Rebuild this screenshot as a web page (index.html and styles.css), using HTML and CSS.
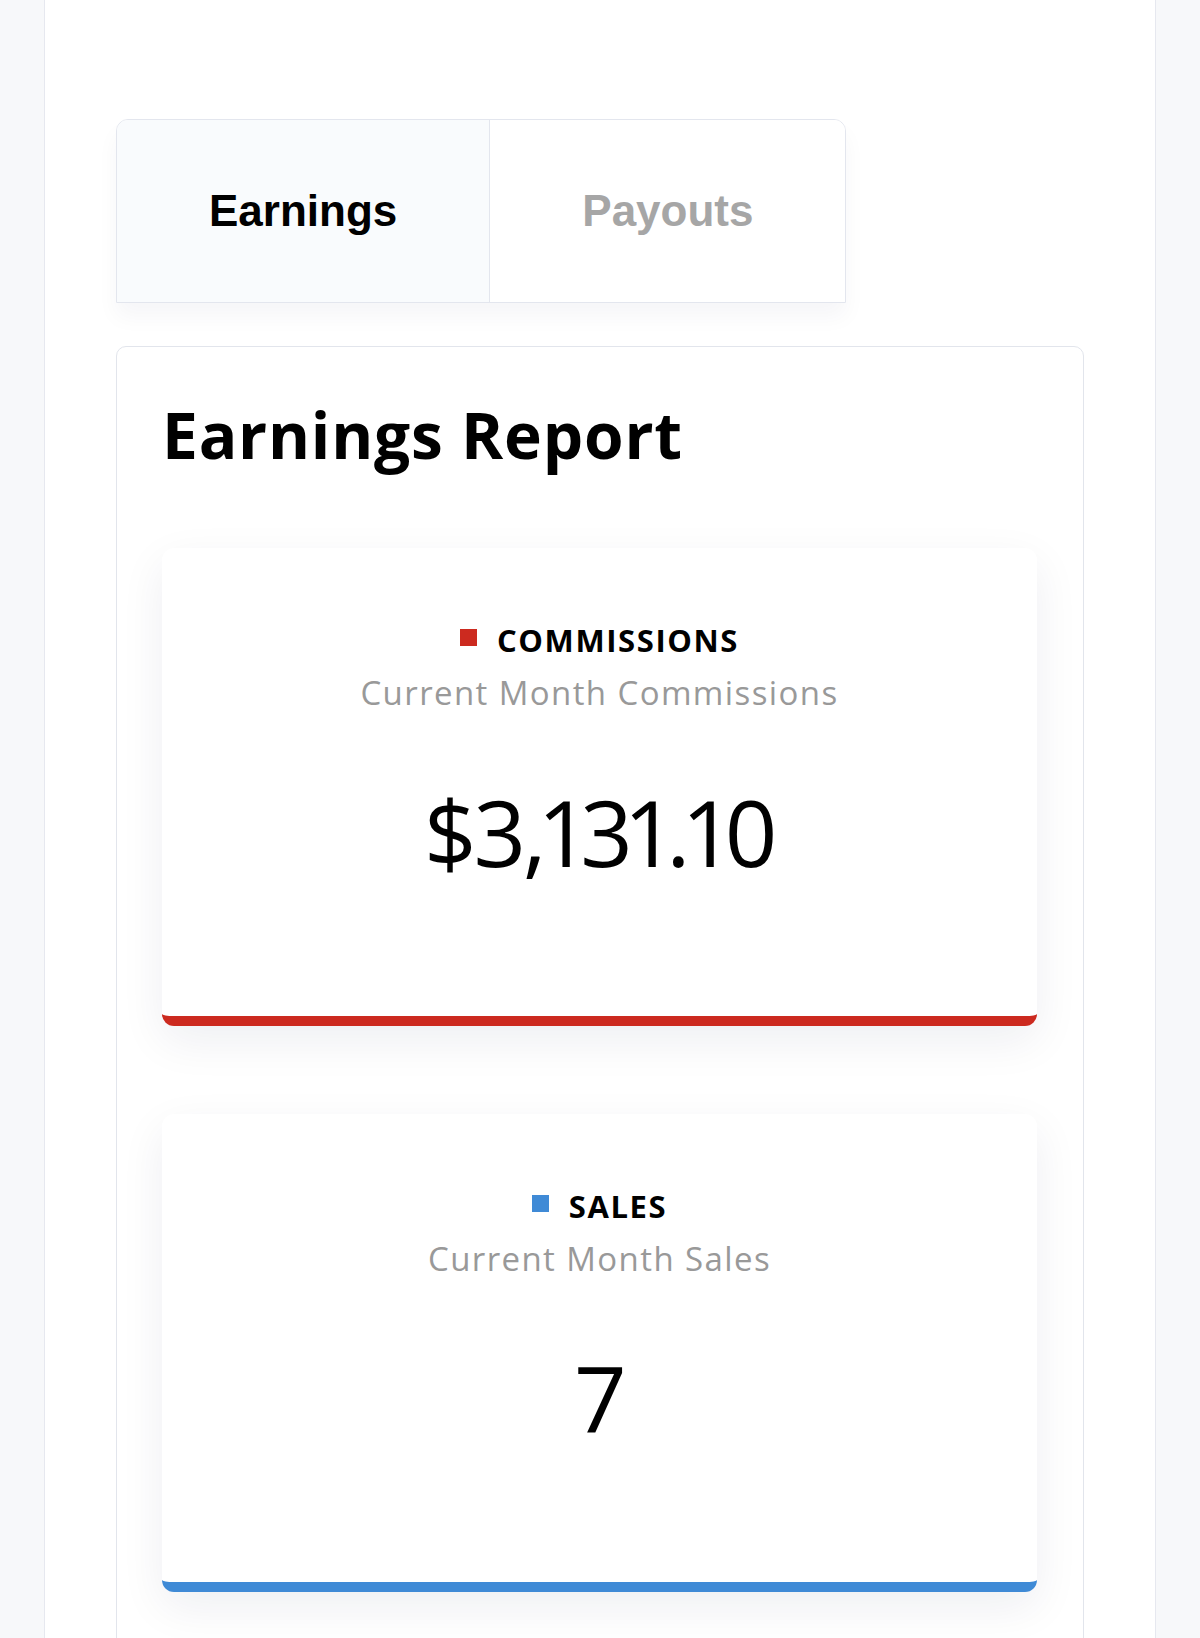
FILE: index.html
```html
<!DOCTYPE html>
<html lang="en">
<head>
    <meta charset="UTF-8">
    <meta name="viewport" content="width=device-width, initial-scale=1.0">
    <title>Earnings Report</title>
    <link rel="stylesheet" href="styles.css">
</head>
<body>
    <div class="page">
        <div class="tabs">
            <div class="tab active">Earnings</div>
            <div class="tab">Payouts</div>
        </div>

        <div class="report">
            <h1>Earnings Report</h1>

            <div class="stat-card commissions">
                <div class="stat-label"><span class="dot"></span>COMMISSIONS</div>
                <div class="stat-sub">Current Month Commissions</div>
                <div class="stat-value">$3,131.10</div>
            </div>

            <div class="stat-card sales">
                <div class="stat-label"><span class="dot"></span>SALES</div>
                <div class="stat-sub">Current Month Sales</div>
                <div class="stat-value">7</div>
            </div>
        </div>
    </div>
</body>
</html>
```

FILE: styles.css
```css
body {
    margin: 0;
    background: #f7f8fa;
    font-family: 'Open Sans', sans-serif;
    color: #000;
}
.page {
    margin: 0 44px;
    min-height: 1700px;
    background: #fff;
    border-left: 1px solid #e6e8ef;
    border-right: 1px solid #e6e8ef;
    padding: 119px 71px 0 71px;
}
.tabs {
    display: inline-flex;
    border: 1px solid #e3e6ee;
    border-radius: 12px 12px 0 0;
    box-shadow: 0 14px 22px rgba(20, 30, 70, 0.04);
    overflow: hidden;
}
.tab {
    height: 182px;
    padding: 0 92px;
    display: flex;
    align-items: center;
    font-family: 'Liberation Sans', Arial, sans-serif;
    font-weight: bold;
    font-size: 44px;
    color: #a6a6a6;
    background: #fff;
}
.tab.active {
    color: #000;
    background: #f9fbfd;
    border-right: 1px solid #e3e6ee;
}
.report {
    margin-top: 43px;
    border: 1px solid #e2e5ec;
    border-radius: 10px;
    padding: 50px 46px 60px 45px;
}
.report h1 {
    margin: 0 0 75px 0;
    font-size: 64px;
    line-height: 76px;
    font-weight: 700;
    letter-spacing: 0.8px;
}
.stat-card {
    box-sizing: border-box;
    min-height: 478px;
    background: #fff;
    border-radius: 12px;
    border-bottom: 10px solid #cc2a1f;
    box-shadow: 0 15px 45px rgba(20, 30, 70, 0.07);
    text-align: center;
    padding-top: 74px;
}
.stat-card.sales {
    margin-top: 88px;
    border-bottom-color: #3f8ad6;
}
.stat-label {
    font-size: 31px;
    line-height: 37px;
    font-weight: 700;
    letter-spacing: 1.6px;
}
.dot {
    display: inline-block;
    width: 17px;
    height: 17px;
    margin-right: 20px;
    vertical-align: 6px;
    background: #cc2a1f;
}
.sales .dot {
    background: #3f8ad6;
}
.stat-sub {
    margin-top: 14px;
    font-size: 33px;
    line-height: 40px;
    color: #999;
    letter-spacing: 1.4px;
}
.stat-value {
    margin-top: 64px;
    font-size: 92px;
    line-height: 110px;
    font-weight: 500;
    font-variant-numeric: proportional-nums;
    letter-spacing: -3px;
}
```
